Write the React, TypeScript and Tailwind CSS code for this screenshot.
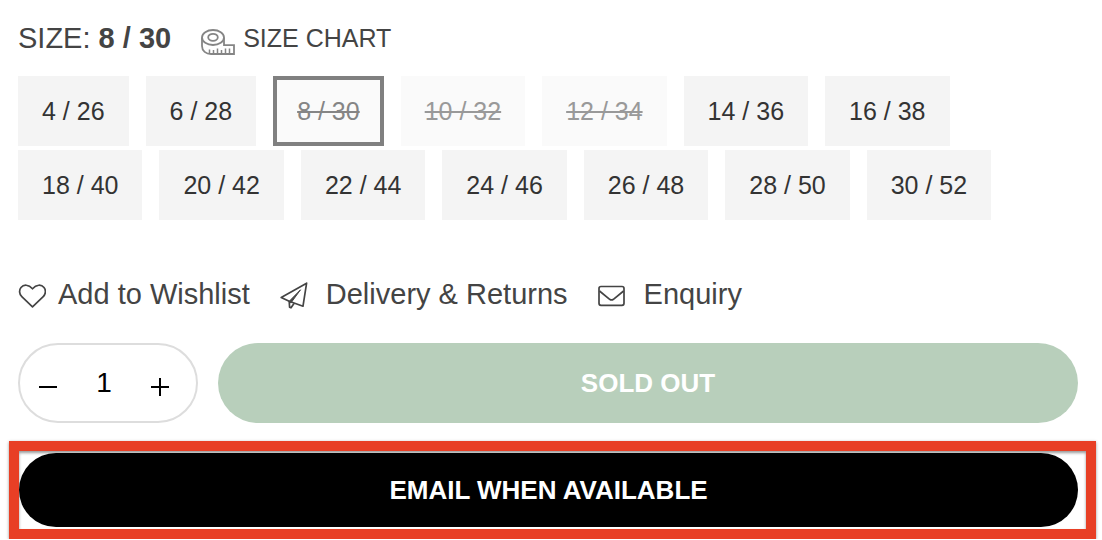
import { useState } from 'react';

interface SizeOption {
  label: string;
  soldOut?: boolean;
}

const SIZES: SizeOption[] = [
  { label: '4 / 26' },
  { label: '6 / 28' },
  { label: '8 / 30', soldOut: true },
  { label: '10 / 32', soldOut: true },
  { label: '12 / 34', soldOut: true },
  { label: '14 / 36' },
  { label: '16 / 38' },
  { label: '18 / 40' },
  { label: '20 / 42' },
  { label: '22 / 44' },
  { label: '24 / 46' },
  { label: '26 / 48' },
  { label: '28 / 50' },
  { label: '30 / 52' },
];

function TapeIcon() {
  return (
    <svg width="34" height="26" viewBox="0 0 34 26" fill="none" stroke="#858585" strokeWidth="1.8" aria-hidden="true">
      <ellipse cx="12" cy="8.500" rx="11" ry="7.500" />
      <ellipse cx="12" cy="8.300" rx="4.800" ry="3.500" />
      <path d="M1 8.500v8.500c0 5 4 8 9 8h23v-8.800H23V8.500" />
      <path d="M8.500 24v-3.500M12.500 24v-3M16.500 24v-4.500M20.500 24v-3M24.500 24v-4.500M28.500 24v-4.500" strokeWidth="1.5" />
    </svg>
  );
}

function HeartIcon() {
  return (
    <svg width="28" height="24" viewBox="0 0 28 24" fill="none" stroke="#444" strokeWidth="1.7" strokeLinejoin="round" aria-hidden="true">
      <path d="M14.500 22.800 3.800 12.700C1.200 10.200.9 6 3 3.500 5.600.3 10.600.2 14.500 4.800 18.400.2 23.400.3 26 3.500c2.100 2.500 1.800 6.700-.8 9.200z" />
    </svg>
  );
}

function PlaneIcon() {
  return (
    <svg width="28" height="28" viewBox="0 0 28 28" fill="none" stroke="#444" strokeWidth="1.7" strokeLinejoin="round" aria-hidden="true">
      <path d="M26.600 1.200 1.200 15.500l8 3.800 13.800 4.900z" />
      <path d="M9.200 19.300l.4 5.900 1.400.6 3-4.300" />
      <path d="M20.500 7.800 9.200 19.300l1.600 1.800z" fill="#444" strokeWidth="1" />
    </svg>
  );
}

function MailIcon() {
  return (
    <svg width="28" height="22" viewBox="0 0 28 22" fill="none" stroke="#444" strokeWidth="1.7" strokeLinejoin="round" aria-hidden="true">
      <rect x="1" y="1.500" width="25" height="18.800" rx="2" />
      <path d="m1.500 6 10.200 8.300c1.200.9 2.500.9 3.700 0L25.600 6" />
    </svg>
  );
}

export default function App() {
  const [size, setSize] = useState('8 / 30');
  const [qty, setQty] = useState('1');

  const step = (by: number) => setQty((prev) => String(Math.max(1, (Number(prev) || 1) + by)));

  return (
    <main className="bg-white pt-5 font-['Liberation_Sans',Arial,sans-serif] text-[#444]">
      <div className="pl-[18px] pr-6">
        <div className="flex items-center gap-[30px]">
          <p id="size-label" className="text-[29px] leading-9">
            SIZE: <strong>{size}</strong>
          </p>
          <a href="#size-chart" className="flex items-center gap-2 text-[25px] leading-9">
            <span className="pt-2">
              <TapeIcon />
            </span>
            SIZE CHART
          </a>
        </div>

        {/* Sizes */}
        <div role="radiogroup" aria-labelledby="size-label" className="mt-5 flex flex-wrap gap-x-[17px] gap-y-1">
          {SIZES.map(({ label, soldOut }) => (
            <label
              key={label}
              className={`relative flex h-[70px] cursor-pointer items-center px-6 pt-0.5 text-[25px] ${
                soldOut ? 'bg-[#fafafa] line-through decoration-2' : 'bg-[#f4f4f4] text-[#333]'
              } ${soldOut && size === label ? 'text-[#858585]' : ''} ${soldOut && size !== label ? 'text-[#999]' : ''} ${
                size === label ? 'inset-ring-4 inset-ring-[#808080]' : ''
              }`}
            >
              <input
                type="radio"
                name="size"
                value={label}
                checked={size === label}
                onChange={() => setSize(label)}
                className="sr-only"
              />
              {label}
            </label>
          ))}
        </div>

        {/* Links */}
        <nav className="mt-14 flex items-center gap-[30px] text-[29px] leading-9">
          <a href="#wishlist" className="flex items-center gap-3">
            <span className="pt-1">
              <HeartIcon />
            </span>
            Add to Wishlist
          </a>
          <a href="#delivery" className="flex items-center gap-[18px]">
            <span className="pt-1">
              <PlaneIcon />
            </span>
            Delivery &amp; Returns
          </a>
          <a href="#enquiry" className="flex items-center gap-[18px]">
            <span className="pt-1">
              <MailIcon />
            </span>
            Enquiry
          </a>
        </nav>

        <div className="mt-[31px] flex gap-5">
          <div className="flex h-20 w-[180px] shrink-0 items-center justify-between rounded-full border-2 border-[#ddd] pr-[26px] pl-[18px] text-black">
            <button type="button" aria-label="Decrease quantity" onClick={() => step(-1)}>
              <svg width="20" height="20" viewBox="0 0 20 20" stroke="currentColor" strokeWidth="2" className="mt-1">
                <path d="M1 12h18" />
              </svg>
            </button>
            <input
              type="text"
              inputMode="numeric"
              aria-label="Quantity"
              value={qty}
              onChange={(e) => setQty(e.target.value)}
              className="w-14 text-center text-[28px] outline-none"
            />
            <button type="button" aria-label="Increase quantity" onClick={() => step(1)}>
              <svg width="20" height="22" viewBox="0 0 20 22" stroke="currentColor" strokeWidth="2" className="mt-1">
                <path d="M1 13h18M10 4v18" />
              </svg>
            </button>
          </div>
          <button type="button" disabled className="h-20 flex-1 rounded-full bg-[#b8cfbb] text-[26px] font-bold text-white">
            SOLD OUT
          </button>
        </div>
      </div>

      {/* Highlighted call to action */}
      <div className="mt-[18px] ml-[9px] mr-[6px] border-10 border-[#e83f25] pt-0.5 pr-2 pb-0.5 shadow-[0_1px_3px_rgba(0,0,0,0.4),inset_0_2px_3px_rgba(0,0,0,0.4)]">
        <button type="button" className="h-[74px] w-full rounded-full bg-black text-[26px] font-bold text-white">
          EMAIL WHEN AVAILABLE
        </button>
      </div>
    </main>
  );
}
